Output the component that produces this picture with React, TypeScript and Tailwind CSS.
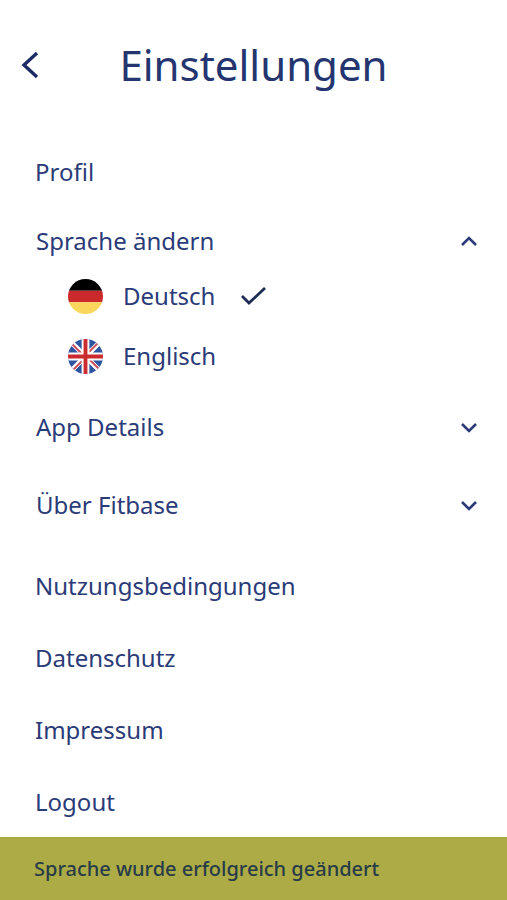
import { useState } from "react";

const links = ["Nutzungsbedingungen", "Datenschutz", "Impressum", "Logout"];

function Chevron({ up = false }: { up?: boolean }) {
  return (
    <svg width="18" height="12" viewBox="0 0 18 12" fill="none" stroke="currentColor" strokeWidth="2.6" aria-hidden="true">
      <path d={up ? "M2 10 9 3l7 7" : "M2 3l7 7 7-7"} />
    </svg>
  );
}

function GermanFlag() {
  return (
    <svg className="size-[35px] rounded-full" viewBox="0 0 36 36" aria-hidden="true">
      <path fill="#000" d="M0 0h36v12H0z" />
      <path fill="#cb2a2c" d="M0 12h36v12H0z" />
      <path fill="#fbd65c" d="M0 24h36v12H0z" />
    </svg>
  );
}

function BritishFlag() {
  return (
    <svg className="size-[35px] rounded-full" viewBox="0 0 36 36" aria-hidden="true">
      <path fill="#2d54a0" d="M0 0h36v36H0z" />
      <path stroke="#fff" strokeWidth="5" d="M0 0l36 36M36 0 0 36" />
      <path stroke="#cb4a58" strokeWidth="2" d="M3 4l12 12M32 3 21 14M33 32l-12-12M4 33l11-11" />
      <path stroke="#fff" strokeWidth="8" d="M18 0v36M0 18h36" />
      <path stroke="#cb2a2f" strokeWidth="4" d="M18 0v36M0 18h36" />
    </svg>
  );
}

const languages = [
  { id: "de", label: "Deutsch", Flag: GermanFlag },
  { id: "en", label: "Englisch", Flag: BritishFlag },
];

export default function App() {
  const [language, setLanguage] = useState("de");
  const [open, setOpen] = useState(true);

  return (
    <div className="min-h-screen bg-white font-['Noto_Sans',sans-serif] text-2xl text-[#2b3b78]">
      {/* Header */}
      <header className="grid h-[130px] grid-cols-[60px_1fr_60px] items-center">
        <button type="button" aria-label="Zurück" className="flex h-12 items-center pl-[21px] text-[#1d2c66]">
          <svg width="18" height="28" viewBox="0 0 18 28" fill="none" stroke="currentColor" strokeWidth="3.4" aria-hidden="true">
            <path d="M16 2 3 14l13 12" />
          </svg>
        </button>
        <h1 className="text-center text-[42px] leading-none text-[#24356f]">Einstellungen</h1>
      </header>

      <main className="pt-1.5">
        <a href="#profil" className="flex h-[72px] items-center px-[35px]">
          Profil
        </a>

        {/* Language */}
        <section className="pb-0.5">
          <button
            type="button"
            aria-expanded={open}
            onClick={() => setOpen(!open)}
            className="flex h-[58px] w-full items-center justify-between pt-2 pr-[29px] pl-9"
          >
            Sprache ändern
            <Chevron up={open} />
          </button>
          {open && (
            <ul>
              {languages.map(({ id, label, Flag }) => (
                <li key={id}>
                  <button
                    type="button"
                    aria-pressed={language === id}
                    onClick={() => setLanguage(id)}
                    className="flex h-[60px] w-full items-center pl-[68px]"
                  >
                    <Flag />
                    <span className="pl-5">{label}</span>
                    {language === id && (
                      <svg className="ml-6" width="28" height="20" viewBox="0 0 28 20" fill="none" stroke="#1d2c56" strokeWidth="2.8" aria-hidden="true">
                        <path d="M3 10l7 7L26 2" />
                      </svg>
                    )}
                  </button>
                </li>
              ))}
            </ul>
          )}
        </section>

        {["App Details", "Über Fitbase"].map((label) => (
          <button
            key={label}
            type="button"
            aria-expanded={false}
            className="flex h-[78px] w-full items-center justify-between pr-[29px] pl-9"
          >
            {label}
            <Chevron />
          </button>
        ))}

        <nav className="pt-1.5 pb-[62px]">
          {links.map((label) => (
            <a key={label} href={`#${label.toLowerCase()}`} className="flex h-[72px] items-center px-[35px]">
              {label}
            </a>
          ))}
        </nav>
      </main>

      {/* Snackbar */}
      <div role="status" className="fixed inset-x-0 bottom-0 flex h-[63px] items-center bg-[#adab45] px-[34px] text-xl font-medium text-[#273c48]">
        Sprache wurde erfolgreich geändert
      </div>
    </div>
  );
}
